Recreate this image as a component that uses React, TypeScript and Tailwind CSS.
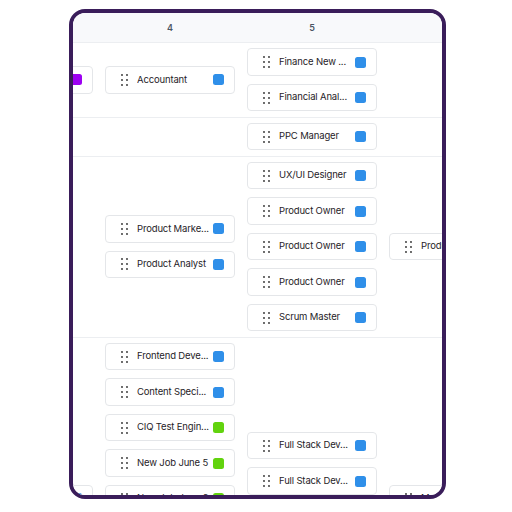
import React from "react";

type Job = {
  title: string;
  color?: "blue" | "green" | "purple";
};

type Lane = {
  cells: Job[][];
  offsets?: number[];
};

const colorClass = {
  blue: "bg-[#2f8fe9]",
  green: "bg-[#62d30e]",
  purple: "bg-[#9d00f2]",
};

const columns = ["3", "4", "5", "6"];

const lanes: Lane[] = [
  {
    cells: [
      [{ title: "Marketing Lead", color: "purple" }],
      [{ title: "Accountant" }],
      [{ title: "Finance New ..." }, { title: "Financial Anal..." }],
      [],
    ],
  },
  {
    cells: [[], [], [{ title: "PPC Manager" }], []],
  },
  {
    cells: [
      [],
      [{ title: "Product Marke..." }, { title: "Product Analyst" }],
      [
        { title: "UX/UI Designer" },
        { title: "Product Owner" },
        { title: "Product Owner" },
        { title: "Product Owner" },
        { title: "Scrum Master" },
      ],
      [{ title: "Product Owner" }],
    ],
  },
  {
    cells: [
      [{ title: "Data Analyst" }],
      [
        { title: "Frontend Deve..." },
        { title: "Content Speci..." },
        { title: "CIQ Test Engin...", color: "green" },
        { title: "New Job June 5", color: "green" },
        { title: "New Job June 6", color: "green" },
        { title: "New Job June 7", color: "green" },
      ],
      [{ title: "Full Stack Dev..." }, { title: "Full Stack Dev..." }],
      [{ title: "Marketing Intern" }],
    ],
    offsets: [142, 0, 89, 142],
  },
];

export default function App() {
  return (
    <div className="h-[512px] w-[512px] bg-white pl-[69px] pt-[9px] font-['Inter',sans-serif]">
      <div className="h-[490px] w-[377px] overflow-hidden rounded-[16px] border-4 border-[#3a1d5a] bg-white">
        <div className="ml-[-116px] w-[568px]">
          <div className="flex h-[30px] border-b border-[#eceef1] bg-[#f8f9fb]">
            {columns.map((label) => (
              <div
                key={label}
                className="flex w-[142px] items-center justify-center text-[9px] font-semibold text-[#4b5563]"
              >
                {label}
              </div>
            ))}
          </div>
          {lanes.map((lane, i) => (
            <LaneRow key={i} lane={lane} />
          ))}
        </div>
      </div>
    </div>
  );
}

function LaneRow({ lane }: { lane: Lane }) {
  const topAligned = Boolean(lane.offsets);
  return (
    <div className={`flex border-b border-[#eceef1] py-[5.25px] ${topAligned ? "items-start" : "items-center"}`}>
      {lane.cells.map((jobs, col) => (
        <div
          key={col}
          className="flex w-[142px] flex-col gap-[8px] px-[6px]"
          style={lane.offsets ? { paddingTop: lane.offsets[col] } : undefined}
        >
          {jobs.map((job, k) => (
            <JobCard key={k} job={job} />
          ))}
        </div>
      ))}
    </div>
  );
}

function JobCard({ job }: { job: Job }) {
  const color = colorClass[job.color ?? "blue"];
  return (
    <div className="flex h-[27.5px] w-[130px] items-center rounded-[4px] border border-[#e4e6e9] bg-white pl-[14.5px] pr-[10px]">
      <DragHandle />
      <span className="ml-[9.5px] mr-[4px] flex-1 overflow-hidden whitespace-nowrap text-[9.5px] tracking-[-0.15px] text-[#1f2328]">
        {job.title}
      </span>
      <span className={`h-[11px] w-[11px] shrink-0 rounded-[2.5px] ${color}`} />
    </div>
  );
}

function DragHandle() {
  return (
    <svg width="7" height="12" viewBox="0 0 7 12" className="shrink-0">
      {[1, 6].map((x) =>
        [1, 6, 11].map((y) => <circle key={`${x}-${y}`} cx={x} cy={y} r="0.9" fill="#2b2b2b" />)
      )}
    </svg>
  );
}
